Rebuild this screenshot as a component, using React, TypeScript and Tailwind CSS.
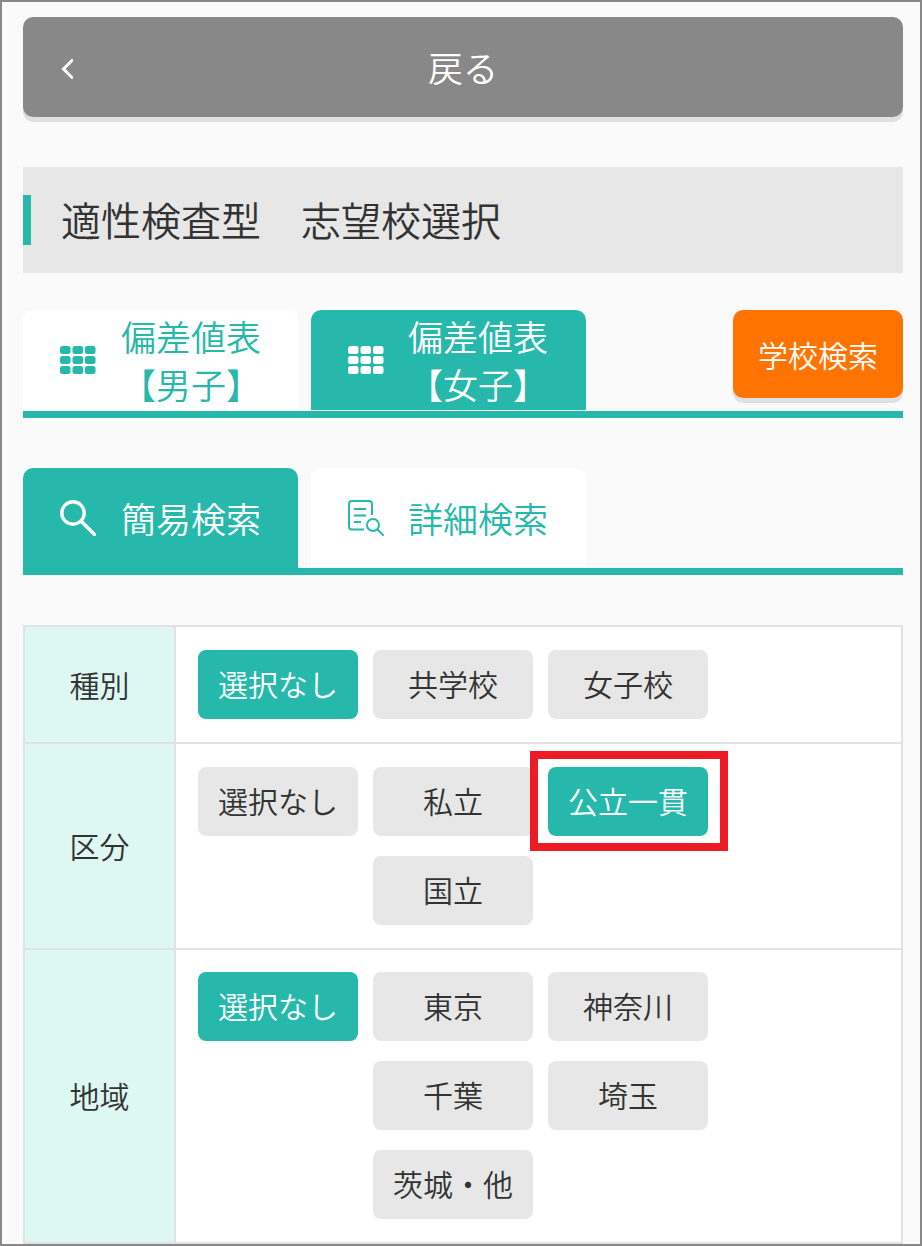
import type { ReactNode } from "react"

/** Small 3x3 block icon used on the ranking table tabs */
function GridIcon({ className }: { className: string }) {
  const cells = [0, 1, 2].flatMap((y) => [0, 1, 2].map((x) => ({ x, y })))
  return (
    <svg viewBox="0 0 36 28" className={`w-9 h-7 fill-current ${className}`}>
      {cells.map(({ x, y }) => (
        <rect key={`${x}-${y}`} x={x * 12.5} y={y * 10} width="10.5" height="8" rx="2.5" />
      ))}
    </svg>
  )
}

function SearchIcon() {
  return (
    <svg viewBox="0 0 36 36" className="w-9 h-9 fill-none stroke-white stroke-[3.4px]">
      <circle cx="13" cy="13" r="11.2" />
      <path d="M21.5 21.5 L34.5 34.5" strokeLinecap="round" />
    </svg>
  )
}

function DetailIcon() {
  return (
    <svg viewBox="0 0 36 36" className="w-9 h-9 fill-none stroke-[#26b8aa] stroke-[2px]">
      <path d="M16 29.5 H4 Q1 29.5 1 26.5 V4 Q1 1 4 1 H21 Q24 1 24 4 V15" />
      <path d="M6 9 H18 M6 15.5 H18 M6 22 H13" />
      <circle cx="25" cy="25" r="6" />
      <path d="M29.5 29.5 L35 35" strokeLinecap="round" />
    </svg>
  )
}

interface TabProps {
  active?: boolean
  icon: ReactNode
  children: ReactNode
  className?: string
  textClassName?: string
}

function Tab({ active = false, icon, children, className = "", textClassName = "ml-[25px]" }: TabProps) {
  return (
    <div
      className={`w-[275px] rounded-t-[10px] flex items-center pl-[37px] ${
        active ? "bg-[#26b8aa] text-white" : "bg-white text-[#26b8aa]"
      } ${className}`}
    >
      {icon}
      <div className={`w-[140px] text-center text-[35px] leading-[48px] whitespace-nowrap ${textClassName}`}>{children}</div>
    </div>
  )
}

function Choice({ label, on = false, className = "" }: { label: string; on?: boolean; className?: string }) {
  return (
    <div
      className={`h-[69px] pb-[2px] rounded-lg flex items-center justify-center text-[30px] ${
        on ? "bg-[#26b8aa] text-white" : "bg-[#e7e7e7] text-[#333]"
      } ${className}`}
    >
      {label}
    </div>
  )
}

function Row({ label, className = "", children }: { label: string; className?: string; children: ReactNode }) {
  return (
    <div className={`flex border-b-2 border-[#e2e2e2] ${className}`}>
      <div className="w-[149px] pb-[1px] bg-[#ddf8f3] border-r-2 border-[#e2e2e2] flex items-center justify-center text-[30px] text-[#333] box-content">
        {label}
      </div>
      <div className="flex-1 bg-white pl-[22px] grid grid-cols-[160px_160px_160px] gap-x-[15px] gap-y-5 content-start">
        {children}
      </div>
    </div>
  )
}

export default function App() {
  return (
    <div className="w-[922px] h-[1246px] overflow-hidden border-2 border-[#888] bg-[#fafafa] pl-[21px] pr-[17px] pt-[15px] font-[350] font-['Noto_Sans_CJK_JP','Noto_Sans',sans-serif] text-[#333]">
      {/* Back button */}
      <div className="h-[100px] rounded-[10px] bg-[#888] shadow-[0_5px_0_#e0e0e0] text-white grid grid-cols-[1fr_auto_1fr] items-center">
        <svg viewBox="0 0 12 20" className="w-3 h-5 ml-[38px] mt-1 fill-none stroke-white stroke-[3px]">
          <path d="M11 1.5 L2.5 10 L11 18.5" strokeLinecap="round" />
        </svg>
        <span className="text-[35px] leading-none mb-[1px]">戻る</span>
      </div>

      {/* Page heading */}
      <div className="mt-[50px] h-[106px] bg-[#e7e7e7] flex items-center">
        <div className="w-2 h-[50px] bg-[#26b8aa]" />
        <h1 className="ml-[30px] text-[40px] leading-none mt-[-2px]">適性検査型　志望校選択</h1>
      </div>

      {/* Ranking table tabs */}
      <div className="mt-[37px] border-b-[7px] border-[#26b8aa] flex items-start h-[108px]">
        <Tab icon={<GridIcon className="text-[#26b8aa]" />} className="h-[101px] border-b border-white">
          <span className="block mb-[1px]">
            偏差値表
            <br />
            【男子】
          </span>
        </Tab>
        <Tab active icon={<GridIcon className="text-white" />} className="h-[100px] ml-[13px]" textClassName="ml-[24px]">
          <span className="block mb-[1px]">
            偏差値表
            <br />
            【女子】
          </span>
        </Tab>
        <div className="ml-auto w-[170px] h-[88px] rounded-[10px] bg-[#ff7300] shadow-[0_5px_0_#e0e0e0] text-white text-[30px] flex items-center justify-center">
          学校検索
        </div>
      </div>

      {/* Search mode tabs */}
      <div className="mt-[50px] border-b-[7px] border-[#26b8aa] flex h-[107px]">
        <Tab active icon={<SearchIcon />} className="h-[100px]">
          簡易検索
        </Tab>
        <Tab icon={<DetailIcon />} className="h-[100px] ml-[13px]" textClassName="ml-[24px]">
          詳細検索
        </Tab>
      </div>

      {/* Filter table */}
      <div className="mt-[50px] border-t-2 border-l-2 border-r-2 border-[#e2e2e2]">
        <Row label="種別" className="h-[117px] [&>div:last-child]:pt-[23px]">
          <Choice label="選択なし" on />
          <Choice label="共学校" />
          <Choice label="女子校" />
        </Row>
        <Row label="区分" className="h-[206px] [&>div:last-child]:pt-[23px]">
          <Choice label="選択なし" />
          <Choice label="私立" />
          <div className="relative">
            <Choice label="公立一貫" on />
            <div className="absolute left-[-18px] top-[-16px] w-[198px] h-[100px] border-8 border-[#ed1c24]" />
          </div>
          <Choice label="国立" className="col-start-2" />
        </Row>
        <Row label="地域" className="h-[294px] [&>div:last-child]:pt-[22px]">
          <Choice label="選択なし" on />
          <Choice label="東京" />
          <Choice label="神奈川" />
          <Choice label="千葉" className="col-start-2" />
          <Choice label="埼玉" />
          <Choice label="茨城・他" className="col-start-2" />
        </Row>
      </div>
    </div>
  )
}
